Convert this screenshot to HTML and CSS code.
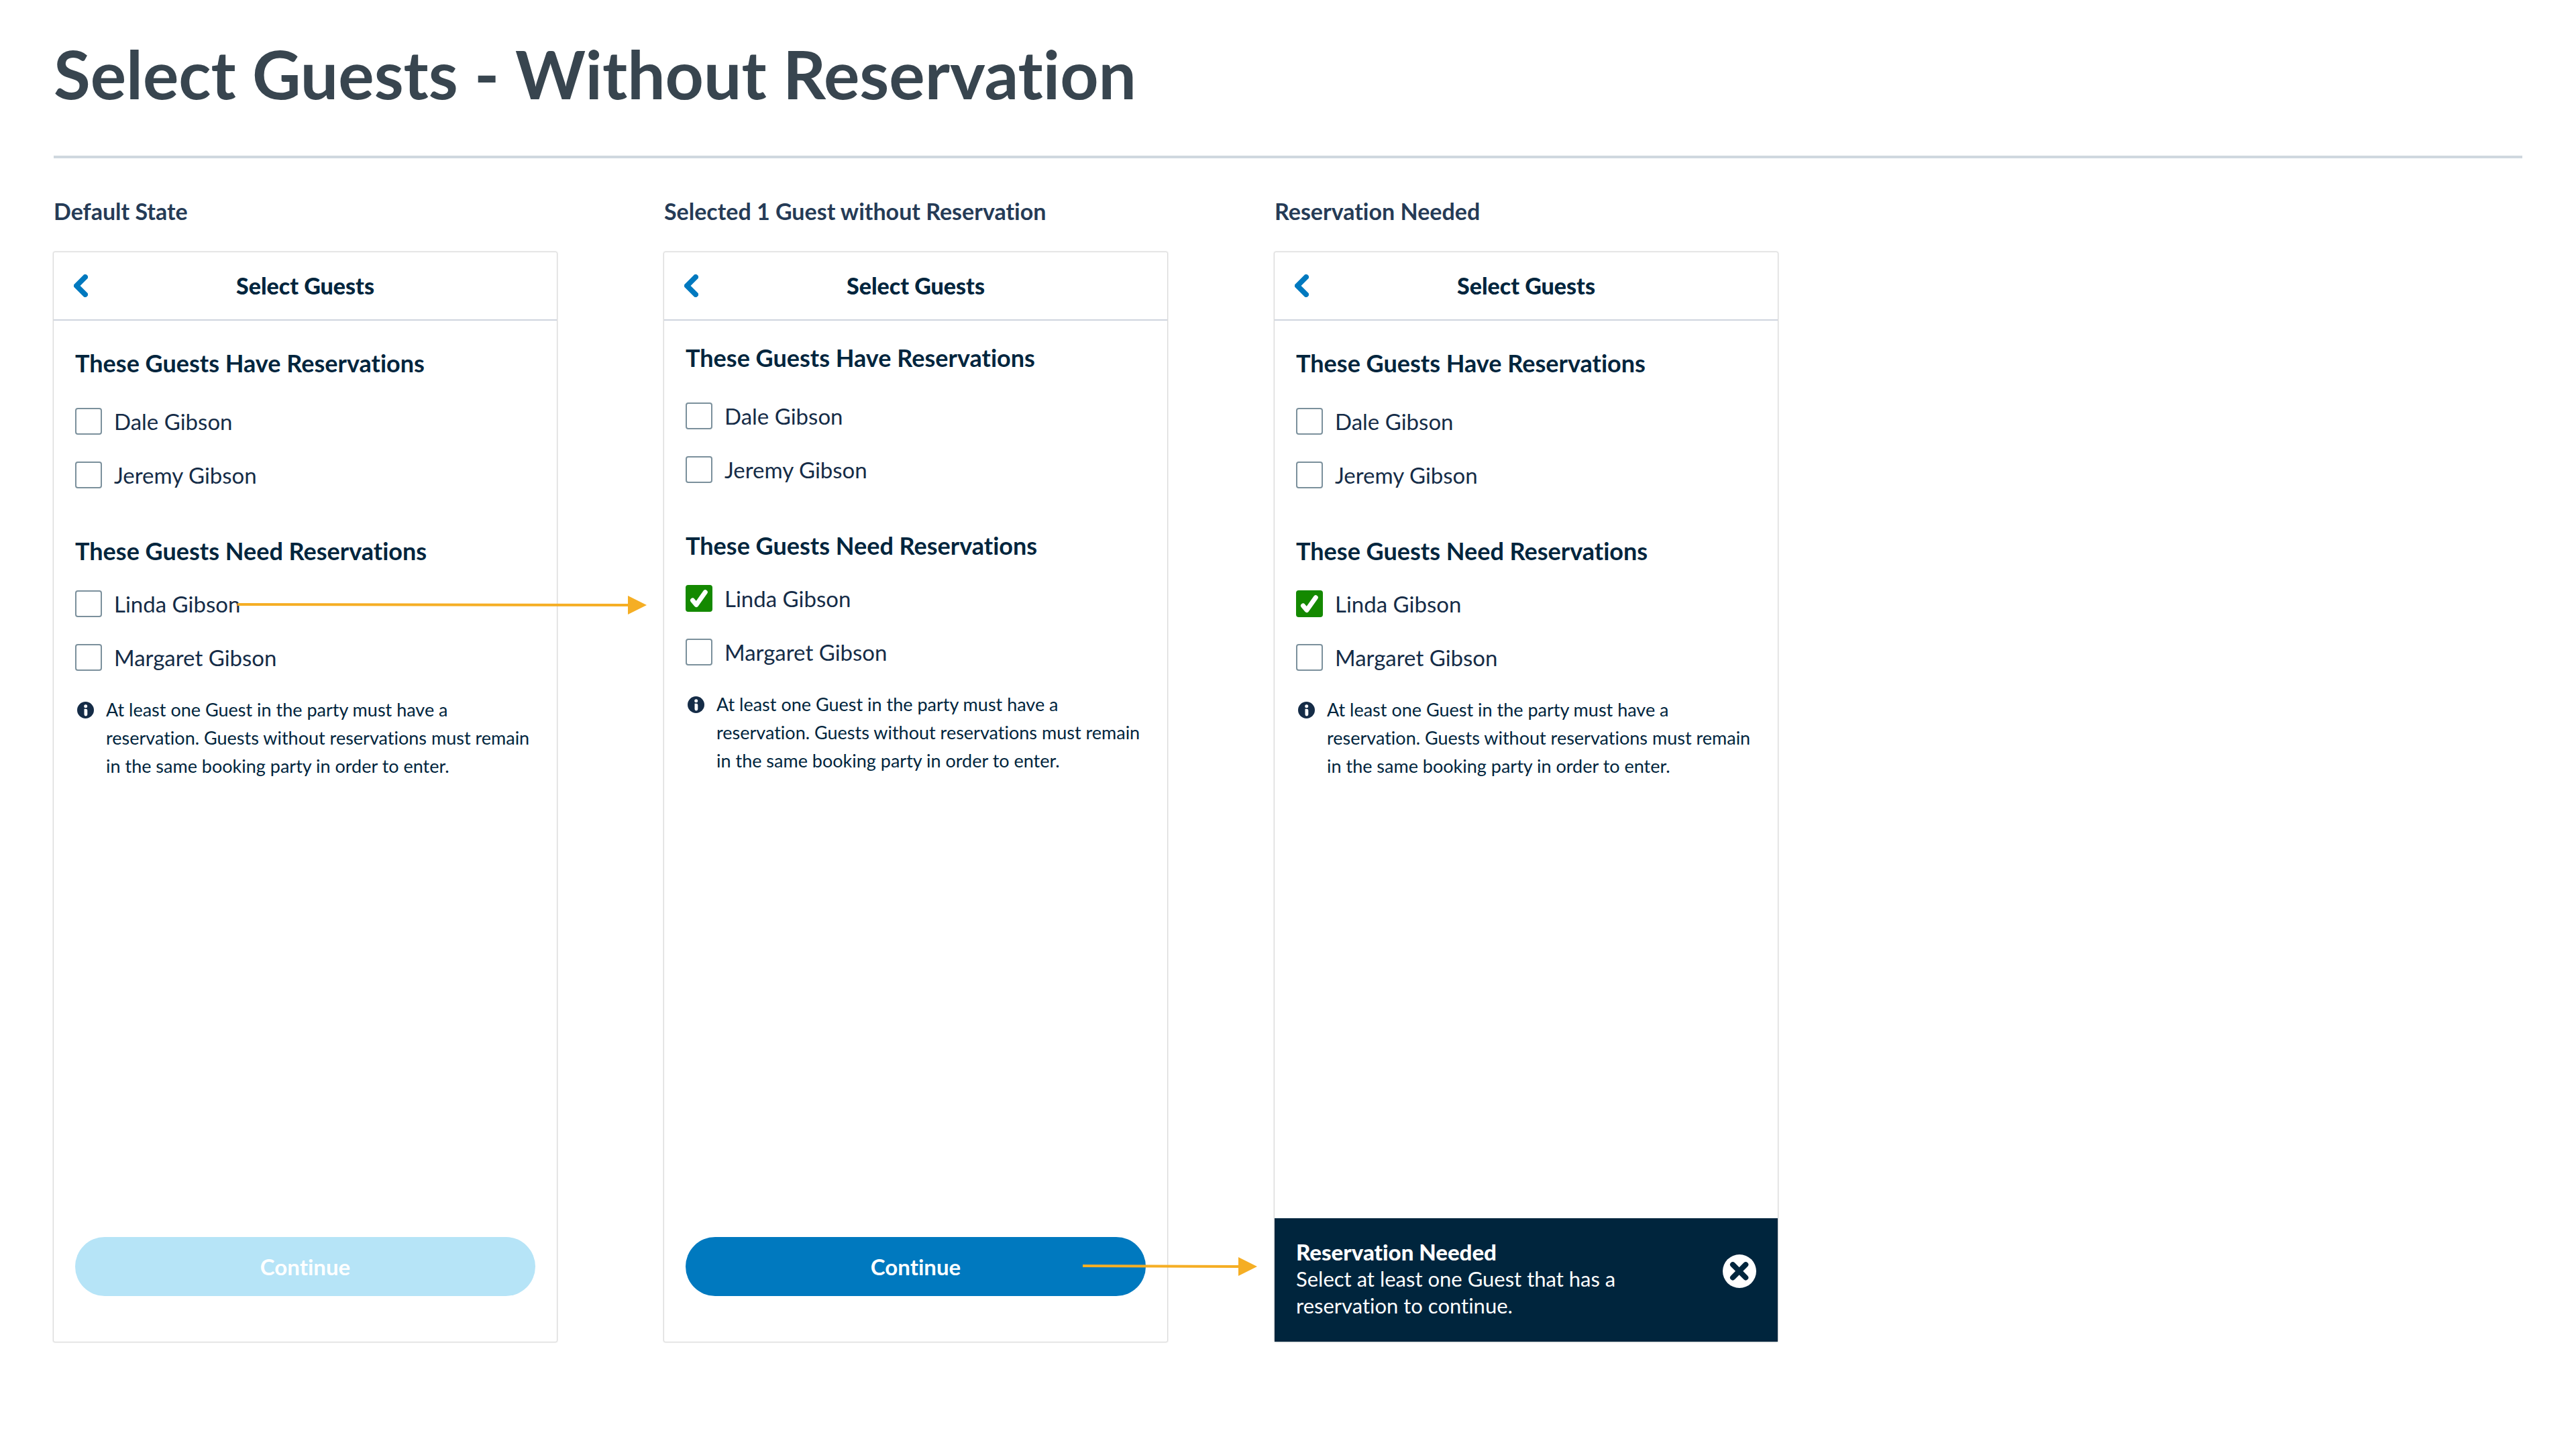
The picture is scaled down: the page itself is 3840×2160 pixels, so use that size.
FILE: index.html
```html
<!DOCTYPE html>
<html lang="en">
<head>
<meta charset="utf-8">
<meta name="viewport" content="width=device-width, initial-scale=1">
<title>Select Guests - Without Reservation</title>
<link rel="stylesheet" href="styles.css">
</head>
<body>
<header class="board-header">
  <h1 class="board-title">Select Guests - Without Reservation</h1>
</header>

<main class="board">
  <section class="state">
    <h2 class="caption">Default State</h2>
    <div class="screen">
      <div class="nav">
        <button class="icon-button" type="button" aria-label="Back"><svg class="chevron" viewBox="0 0 21 34" aria-hidden="true"><path d="M17 4 4 17 17 30"/></svg></button>
        <h3 class="nav-title">Select Guests</h3>
      </div>
      <form class="content">
        <h4 class="group-title">These Guests Have Reservations</h4>
        <ul class="guests">
          <li class="guest"><input class="box" type="checkbox" id="a-dale"><label for="a-dale">Dale Gibson</label></li>
          <li class="guest"><input class="box" type="checkbox" id="a-jeremy"><label for="a-jeremy">Jeremy Gibson</label></li>
        </ul>
        <h4 class="group-title">These Guests Need Reservations</h4>
        <ul class="guests need">
          <li class="guest"><input class="box" type="checkbox" id="a-linda"><label for="a-linda">Linda Gibson</label>
            <svg class="arrow arrow-long" viewBox="0 0 610 28" aria-hidden="true"><path class="arrow-line" d="M0 13 584 14"/><path class="arrow-head" d="M582 0v28l28-14z"/></svg>
          </li>
          <li class="guest"><input class="box" type="checkbox" id="a-margaret"><label for="a-margaret">Margaret Gibson</label></li>
        </ul>
        <div class="note">
          <svg class="info" viewBox="0 0 25 25" aria-hidden="true"><circle cx="12.500" cy="12.500" r="12.500"/><circle class="info-mark" cx="12.700" cy="6.700" r="2.500"/><path class="info-mark" d="M10.500 10.800h2.500a2.300 2.300 0 0 1 2.300 2.300v5.900a2.400 2.400 0 0 1-4.800 0z"/></svg>
          <p class="note-text">At least one Guest in the party must have a reservation. Guests without reservations must remain in the same booking party in order to enter.</p>
        </div>
        <div class="actions">
          <button class="continue" type="button" disabled>Continue</button>
        </div>
      </form>
    </div>
  </section>

  <section class="state">
    <h2 class="caption">Selected 1 Guest without Reservation</h2>
    <div class="screen">
      <div class="nav">
        <button class="icon-button" type="button" aria-label="Back"><svg class="chevron" viewBox="0 0 21 34" aria-hidden="true"><path d="M17 4 4 17 17 30"/></svg></button>
        <h3 class="nav-title">Select Guests</h3>
      </div>
      <form class="content content-raised">
        <h4 class="group-title">These Guests Have Reservations</h4>
        <ul class="guests">
          <li class="guest"><input class="box" type="checkbox" id="b-dale"><label for="b-dale">Dale Gibson</label></li>
          <li class="guest"><input class="box" type="checkbox" id="b-jeremy"><label for="b-jeremy">Jeremy Gibson</label></li>
        </ul>
        <h4 class="group-title">These Guests Need Reservations</h4>
        <ul class="guests need">
          <li class="guest"><input class="box" type="checkbox" id="b-linda" checked><svg class="tick" viewBox="0 0 40 40" aria-hidden="true"><path d="M10.500 23 16 29.500 29.300 10.800"/></svg><label for="b-linda">Linda Gibson</label></li>
          <li class="guest"><input class="box" type="checkbox" id="b-margaret"><label for="b-margaret">Margaret Gibson</label></li>
        </ul>
        <div class="note">
          <svg class="info" viewBox="0 0 25 25" aria-hidden="true"><circle cx="12.500" cy="12.500" r="12.500"/><circle class="info-mark" cx="12.700" cy="6.700" r="2.500"/><path class="info-mark" d="M10.500 10.800h2.500a2.300 2.300 0 0 1 2.300 2.300v5.900a2.400 2.400 0 0 1-4.800 0z"/></svg>
          <p class="note-text">At least one Guest in the party must have a reservation. Guests without reservations must remain in the same booking party in order to enter.</p>
        </div>
        <div class="actions">
          <button class="continue" type="button">Continue</button>
          <svg class="arrow arrow-short" viewBox="0 0 260 28" aria-hidden="true"><path class="arrow-line" d="M0 13 234 14"/><path class="arrow-head" d="M232 0v28l28-14z"/></svg>
        </div>
      </form>
    </div>
  </section>

  <section class="state">
    <h2 class="caption">Reservation Needed</h2>
    <div class="screen">
      <div class="nav">
        <button class="icon-button" type="button" aria-label="Back"><svg class="chevron" viewBox="0 0 21 34" aria-hidden="true"><path d="M17 4 4 17 17 30"/></svg></button>
        <h3 class="nav-title">Select Guests</h3>
      </div>
      <form class="content">
        <h4 class="group-title">These Guests Have Reservations</h4>
        <ul class="guests">
          <li class="guest"><input class="box" type="checkbox" id="c-dale"><label for="c-dale">Dale Gibson</label></li>
          <li class="guest"><input class="box" type="checkbox" id="c-jeremy"><label for="c-jeremy">Jeremy Gibson</label></li>
        </ul>
        <h4 class="group-title">These Guests Need Reservations</h4>
        <ul class="guests need">
          <li class="guest"><input class="box" type="checkbox" id="c-linda" checked><svg class="tick" viewBox="0 0 40 40" aria-hidden="true"><path d="M10.500 23 16 29.500 29.300 10.800"/></svg><label for="c-linda">Linda Gibson</label></li>
          <li class="guest"><input class="box" type="checkbox" id="c-margaret"><label for="c-margaret">Margaret Gibson</label></li>
        </ul>
        <div class="note">
          <svg class="info" viewBox="0 0 25 25" aria-hidden="true"><circle cx="12.500" cy="12.500" r="12.500"/><circle class="info-mark" cx="12.700" cy="6.700" r="2.500"/><path class="info-mark" d="M10.500 10.800h2.500a2.300 2.300 0 0 1 2.300 2.300v5.900a2.400 2.400 0 0 1-4.800 0z"/></svg>
          <p class="note-text">At least one Guest in the party must have a reservation. Guests without reservations must remain in the same booking party in order to enter.</p>
        </div>
      </form>
      <div class="banner" role="alert">
        <div class="banner-body">
          <h4 class="banner-title">Reservation Needed</h4>
          <p class="banner-text">Select at least one Guest that has a reservation to continue.</p>
        </div>
        <button class="icon-button banner-close" type="button" aria-label="Close"><svg class="close" viewBox="0 0 50 50" aria-hidden="true"><circle cx="25" cy="25" r="25"/><path d="M15 15.200 34.300 34.500M34.300 15.200 15 34.500"/></svg></button>
      </div>
    </div>
  </section>
</main>
</body>
</html>
```

FILE: styles.css
```css
* {
  box-sizing: border-box;
}

body {
  margin: 0;
  padding: 0 80px 80px;
  background: #fff;
  color: #00253d;
  font-family: Lato, "Open Sans", sans-serif;
  font-variant-ligatures: none;
}

h1, h2, h3, h4, p, ul {
  margin: 0;
  padding: 0;
}

ul {
  list-style: none;
}

button {
  font-family: inherit;
  font-variant-ligatures: inherit;
}

svg {
  display: block;
}

.board-header {
  padding: 49px 0 63px;
  border-bottom: 4px solid #cfd8df;
}

.board-title {
  color: #38454f;
  font-size: 100px;
  line-height: 120px;
  font-weight: 700;
}

.board {
  display: flex;
  gap: 160px;
  padding-top: 58px;
}

.state {
  flex: 0 1 750px;
}

.caption {
  margin-bottom: 40px;
  color: #253b56;
  font-size: 34px;
  line-height: 42px;
  font-weight: 700;
  white-space: nowrap;
}

.screen {
  display: flex;
  flex-direction: column;
  min-height: 1624px;
  border-radius: 2px;
  background: #fff;
  box-shadow: 0 0 2px 1px rgba(0, 0, 0, 0.2);
}

.nav {
  display: grid;
  grid-template-columns: 1fr auto 1fr;
  align-items: center;
  min-height: 102px;
  padding: 0 30px;
  border-bottom: 2px solid #cfd5de;
}

.nav-title {
  font-size: 34px;
  line-height: 40px;
  font-weight: 900;
}

.icon-button {
  justify-self: start;
  padding: 0;
  border: 0;
  background: none;
  cursor: pointer;
}

.chevron {
  width: 21px;
  height: 34px;
  fill: none;
  stroke: #0079bf;
  stroke-width: 8;
  stroke-linecap: round;
  stroke-linejoin: round;
}

.content {
  display: flex;
  flex: 1;
  flex-direction: column;
  padding: 41px 32px 68px;
}

.content-raised {
  padding-top: 33px;
}

.group-title {
  font-size: 36px;
  line-height: 44px;
  font-weight: 700;
}

.guests {
  display: flex;
  flex-direction: column;
  gap: 40px;
  margin: 45px 0 71px;
}

.need {
  margin: 37px 0 37px;
}

.guest {
  position: relative;
  display: flex;
  align-items: center;
  gap: 18px;
  color: #152c47;
  font-size: 33px;
  line-height: 40px;
}

.box {
  appearance: none;
  flex: none;
  width: 40px;
  height: 40px;
  margin: 0;
  border: 2px solid #7b909c;
  border-radius: 4px;
  background: #fff;
}

.box:checked {
  border-color: #148900;
  background: #148900;
}

.tick {
  position: absolute;
  top: 0;
  left: 0;
  width: 40px;
  height: 40px;
  fill: none;
  stroke: #fff;
  stroke-width: 7;
  stroke-linecap: round;
  stroke-linejoin: round;
  pointer-events: none;
}

.note {
  display: flex;
  gap: 18px;
  padding-left: 3px;
}

.info {
  flex: none;
  width: 25px;
  height: 25px;
  margin-top: 9px;
  fill: #152c47;
}

.info-mark {
  fill: #fff;
}

.note-text {
  font-size: 27px;
  line-height: 42px;
}

.actions {
  position: relative;
  margin-top: auto;
}

.continue {
  display: block;
  width: 100%;
  min-height: 88px;
  border: 0;
  border-radius: 44px;
  background: #0079bf;
  color: #fff;
  font-size: 33px;
  line-height: 40px;
  font-weight: 700;
}

.continue:disabled {
  background: #b6e4f7;
}

.banner {
  display: flex;
  align-items: flex-start;
  gap: 80px;
  padding: 30px 32px 34px;
  background: #00253d;
  color: #fff;
}

.banner-body {
  flex: 1;
}

.banner-title {
  font-size: 33px;
  line-height: 40px;
  font-weight: 900;
}

.banner-text {
  font-size: 31px;
  line-height: 40px;
}

.banner-close {
  margin-top: 24px;
}

.close {
  width: 50px;
  height: 50px;
  fill: #fff;
  stroke-width: 8;
  stroke-linecap: round;
}

.close path {
  stroke: #00253d;
}

/* Flow arrows drawn over the screens */
.arrow {
  position: absolute;
  z-index: 1;
  height: 28px;
  pointer-events: none;
}

.arrow-long {
  top: 8px;
  left: 242px;
  width: 610px;
}

.arrow-short {
  top: 30px;
  left: 592px;
  width: 260px;
}

.arrow-line {
  stroke: #f5ae24;
  stroke-width: 4;
}

.arrow-head {
  fill: #f5ae24;
}
```
